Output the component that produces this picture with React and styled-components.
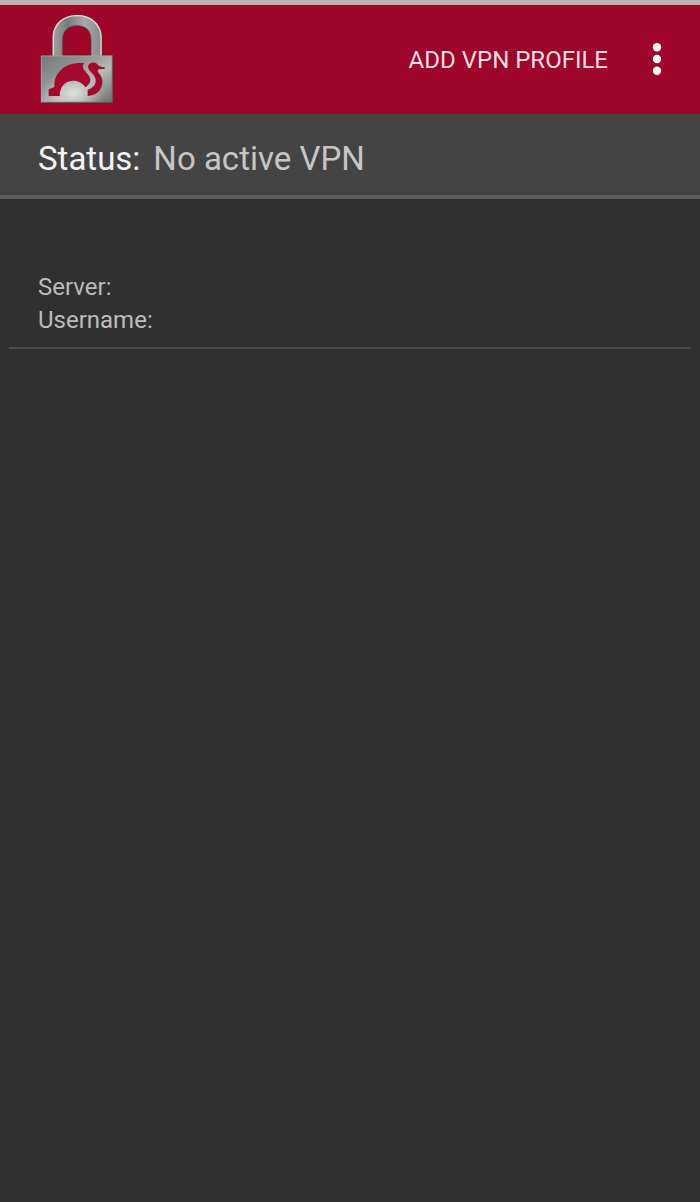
import styled, { createGlobalStyle } from "styled-components";

const GlobalStyle = createGlobalStyle`
    body {
        margin: 0;
        background-color: #303030;
        font-family: Roboto, "Liberation Sans", sans-serif;
    }
`;

const PageContainer = styled.div`
    min-height: 100vh;
    display: flex;
    flex-direction: column;
    background-color: #303030;
    box-sizing: border-box;
    border-top: 5px solid #b5b2b3;
`;

// header
const Header = styled.header`
    display: flex;
    align-items: center;
    justify-content: space-between;
    padding: 8px 24px 9px 40px;
    background-color: #9e0529;
`;

const Logo = styled.svg`
    width: 74px;
    height: 92px;
`;

const Actions = styled.div`
    display: flex;
    align-items: center;
    gap: 30px;
`;

const AddButton = styled.button`
    padding: 2px 0 0;
    border: none;
    background: none;
    color: #f8dfe5;
    font-family: inherit;
    font-size: 24px;
    line-height: 32px;
`;

const MenuButton = styled.button`
    width: 38px;
    height: 48px;
    display: flex;
    align-items: center;
    justify-content: center;
    padding: 0;
    border: none;
    background: none;
`;

// status bar
const StatusBar = styled.section`
    display: flex;
    gap: 13px;
    padding: 25px 38px 16px;
    background-color: #444444;
    border-bottom: 4px solid #5b5b5b;
    font-size: 33px;
    line-height: 40px;
`;

const StatusLabel = styled.span`
    color: #f5f5f5;
`;

const StatusValue = styled.span`
    color: #c6c6c6;
`;

// profile list
const ProfileList = styled.ul`
    margin: 0;
    padding: 0 9px;
    list-style: none;
`;

const ProfileItem = styled.li`
    padding: 72px 29px 10px;
    border-bottom: 2px solid #4b4b4b;
    color: #bcbcbc;
    font-size: 24px;
    line-height: 33px;
`;

function PadlockLogo() {
    return (
        <Logo viewBox="30 39 222 276" role="img" aria-label="strongSwan">
            <defs>
                <linearGradient id="body" x1="0" y1="0" x2="1" y2="1">
                    <stop offset="0" stopColor="#747977" />
                    <stop offset="0.35" stopColor="#8f9693" />
                    <stop offset="0.6" stopColor="#b4bbb7" />
                    <stop offset="0.8" stopColor="#8f9793" />
                    <stop offset="1" stopColor="#69706c" />
                </linearGradient>
                <radialGradient id="shine" cx="0.45" cy="0.8" r="0.45">
                    <stop offset="0" stopColor="#dde2df" />
                    <stop offset="1" stopColor="#c2c8c4" stopOpacity="0" />
                </radialGradient>
                <linearGradient id="shackle" x1="0" y1="0" x2="1" y2="0">
                    <stop offset="0" stopColor="#a0a5a3" />
                    <stop offset="0.3" stopColor="#777c7a" />
                    <stop offset="0.65" stopColor="#a4aaa7" />
                    <stop offset="1" stopColor="#858b88" />
                </linearGradient>
            </defs>
            <path
                d="M68 168V112C68 70 100 45 141 45S215 70 215 112V168H183V118C183 92 167 77 141 77S98 92 98 118V168Z"
                fill="url(#shackle)"
            />
            <path
                d="M70 166V112C70 72 101 47 141 47S213 72 213 112V166"
                fill="none"
                stroke="#d5d9d7"
                strokeWidth="4"
            />
            <path
                d="M98 166V118C98 92 115 77 141 77S183 92 183 118V166"
                fill="none"
                stroke="#5e3b42"
                strokeWidth="2"
            />
            <rect x="33" y="167" width="215" height="141" fill="url(#body)" />
            <rect x="33" y="167" width="215" height="141" fill="url(#shine)" />
            <path d="M34 308V168H247" fill="none" stroke="#aab0ad" strokeWidth="2" />
            <path d="M33 307H247V168" fill="none" stroke="#535956" strokeWidth="3" />
            <path
                d="M56 288V268L73 261C72 240 78 226 90 213C107 194 128 188 162 189C158 196 157 203 163 211C172 222 181 229 181 240C181 248 176 254 167 262C155 247 143 242 128 242C104 243 89 261 89 288Z"
                fill="#a50a2e"
            />
            <path
                d="M177 193C182 187 193 185 201 192C205 198 212 201 224 202V207H209C205 208 202 211 204 216C213 226 219 238 217 250C214 272 199 287 173 288V269C190 264 198 253 197 239C195 225 183 218 177 209C173 203 174 197 177 193Z"
                fill="#a50a2e"
            />
        </Logo>
    );
}

function DotsIcon() {
    return (
        <svg width="10" height="34" viewBox="0 0 10 34" fill="#ffffff" aria-hidden="true">
            <circle cx="5" cy="5.2" r="4.2" />
            <circle cx="5" cy="17" r="4.2" />
            <circle cx="5" cy="28.8" r="4.2" />
        </svg>
    );
}

export default function App() {
    return (
        <PageContainer>
            <GlobalStyle />
            <Header>
                <PadlockLogo />
                <Actions>
                    <AddButton type="button">ADD VPN PROFILE</AddButton>
                    <MenuButton type="button" aria-label="More options">
                        <DotsIcon />
                    </MenuButton>
                </Actions>
            </Header>

            <StatusBar>
                <StatusLabel>Status:</StatusLabel>
                <StatusValue>No active VPN</StatusValue>
            </StatusBar>

            <ProfileList>
                <ProfileItem>
                    <div>Server:</div>
                    <div>Username:</div>
                </ProfileItem>
            </ProfileList>
        </PageContainer>
    );
}
